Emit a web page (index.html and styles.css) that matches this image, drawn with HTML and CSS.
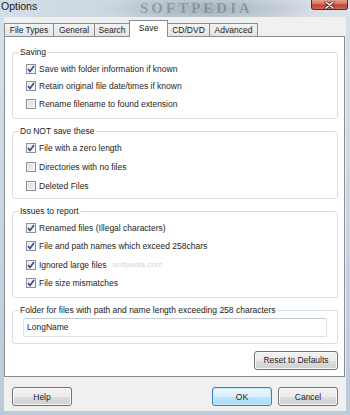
FILE: index.html
```html
<!DOCTYPE html>
<html lang="en">
<head>
  <meta charset="UTF-8" />
  <title>Options</title>
  <link rel="stylesheet" href="styles.css">
</head>
<body>
  <div class="window">
    <!-- Title bar -->
    <div class="titlebar">
      <span class="title">Options</span>
      <span class="wm-title">SOFTPEDIA</span>
      <div class="close">
        <svg width="11" height="8" viewBox="0 0 11 8">
          <path d="M2 1 L9 7 M9 1 L2 7" stroke="#5a1a12" stroke-width="3" stroke-linecap="round"/>
          <path d="M2 1 L9 7 M9 1 L2 7" stroke="#ffffff" stroke-width="1.6" stroke-linecap="round"/>
        </svg>
      </div>
    </div>

    <div class="client">
      <div class="tabs">
        <div class="tab w-types">File Types</div>
        <div class="tab w-general">General</div>
        <div class="tab w-search">Search</div>
        <div class="tab active w-save">Save</div>
        <div class="tab w-cd">CD/DVD</div>
        <div class="tab w-adv">Advanced</div>
      </div>

      <div class="panel">
        <fieldset class="group group-saving">
          <legend>Saving</legend>
          <div class="row"><span class="box on"><svg width="8" height="8" viewBox="0 0 8 8"><path d="M1 4 L3 6.5 L7 1" fill="none" stroke="#2c4a8c" stroke-width="1.6"/></svg></span>Save with folder information if known</div>
          <div class="row"><span class="box on"><svg width="8" height="8" viewBox="0 0 8 8"><path d="M1 4 L3 6.5 L7 1" fill="none" stroke="#2c4a8c" stroke-width="1.6"/></svg></span>Retain original file date/times if known</div>
          <div class="row"><span class="box"></span>Rename filename to found extension</div>
        </fieldset>

        <fieldset class="group group-skip">
          <legend>Do NOT save these</legend>
          <div class="row"><span class="box on"><svg width="8" height="8" viewBox="0 0 8 8"><path d="M1 4 L3 6.5 L7 1" fill="none" stroke="#2c4a8c" stroke-width="1.6"/></svg></span>File with a zero length</div>
          <div class="row"><span class="box"></span>Directories with no files</div>
          <div class="row"><span class="box"></span>Deleted Files</div>
        </fieldset>

        <fieldset class="group group-issues">
          <legend>Issues to report</legend>
          <div class="row"><span class="box on"><svg width="8" height="8" viewBox="0 0 8 8"><path d="M1 4 L3 6.5 L7 1" fill="none" stroke="#2c4a8c" stroke-width="1.6"/></svg></span>Renamed files (Illegal characters)</div>
          <div class="row"><span class="box on"><svg width="8" height="8" viewBox="0 0 8 8"><path d="M1 4 L3 6.5 L7 1" fill="none" stroke="#2c4a8c" stroke-width="1.6"/></svg></span>File and path names which exceed 258chars</div>
          <div class="row"><span class="box on"><svg width="8" height="8" viewBox="0 0 8 8"><path d="M1 4 L3 6.5 L7 1" fill="none" stroke="#2c4a8c" stroke-width="1.6"/></svg></span>Ignored large files<span class="wm-small">softpedia.com</span></div>
          <div class="row"><span class="box on"><svg width="8" height="8" viewBox="0 0 8 8"><path d="M1 4 L3 6.5 L7 1" fill="none" stroke="#2c4a8c" stroke-width="1.6"/></svg></span>File size mismatches</div>
        </fieldset>

        <fieldset class="group group-folder">
          <legend>Folder for files with path and name length exceeding 258 characters</legend>
          <input class="text-input" type="text" value="LongName" />
        </fieldset>

        <div class="reset-row">
          <button class="btn btn-reset">Reset to Defaults</button>
        </div>
      </div>

      <div class="bottom-row">
        <button class="btn">Help</button>
        <button class="btn btn-default btn-ok">OK</button>
        <button class="btn">Cancel</button>
      </div>
    </div>
  </div>
</body>
</html>
```

FILE: styles.css
```css
body {
  margin: 0;
  font-family: "Liberation Sans", Arial, sans-serif;
  font-size: 8.5px;
  color: #1e1e1e;
}

.window {
  width: 350px;
  height: 415px;
  display: flex;
  flex-direction: column;
  overflow: hidden;
  background: linear-gradient(to bottom, #d9e2ea 0%, #c7d3df 60%, #bccbd9 100%);
}

/* Title bar */
.titlebar {
  position: relative;
  height: 17px;
  display: flex;
  align-items: flex-start;
  background:
    radial-gradient(ellipse 110px 16px at 210px 9px, rgba(120, 130, 140, 0.45), rgba(120, 130, 140, 0) 100%),
    linear-gradient(to right, #d3dde6, #c9d4de 50%, #dbe3ea);
}

.title {
  font-size: 10.5px;
  line-height: 13px;
  padding-left: 1px;
  color: #1b1b1b;
  position: relative;
  z-index: 1;
}

.wm-title {
  position: absolute;
  left: 140px;
  top: 1px;
  font-family: "Liberation Serif", serif;
  font-weight: bold;
  font-size: 15px;
  line-height: 15px;
  letter-spacing: 3px;
  color: rgba(70, 80, 90, 0.35);
  filter: blur(0.7px);
}

.close {
  margin-left: auto;
  margin-right: 2px;
  width: 37px;
  height: 10px;
  box-sizing: border-box;
  border: 1px solid #6a2318;
  border-top: none;
  border-radius: 0 0 3px 3px;
  background: linear-gradient(to bottom, #e5a190 0%, #d4705c 45%, #c0402e 55%, #d2685a 100%);
  display: flex;
  align-items: center;
  justify-content: center;
  position: relative;
  z-index: 1;
}

/* Client area */
.client {
  flex: 1;
  margin: 0 4px 4px 4px;
  background: #f0f0f0;
  display: flex;
  flex-direction: column;
}

.tabs {
  display: flex;
  align-items: flex-end;
  height: 16px;
  padding-top: 3px;
}

.tab {
  box-sizing: border-box;
  height: 13px;
  margin-left: -1px;
  border: 1px solid #898c95;
  border-bottom: none;
  background: linear-gradient(to bottom, #f3f3f3, #e4e4e4);
  line-height: 12px;
  text-align: center;
  white-space: nowrap;
}

.tab:first-child {
  margin-left: 0;
}

.tab.active {
  height: 17px;
  margin-bottom: -1px;
  padding-top: 1px;
  background: #ffffff;
  position: relative;
  z-index: 1;
}

.w-types { width: 50px; }
.w-general { width: 42px; }
.w-search { width: 36px; }
.w-save { width: 39px; }
.w-cd { width: 43px; }
.w-adv { width: 49px; }

.panel {
  width: 341px;
  box-sizing: border-box;
  border: 1px solid #898c95;
  background: #ffffff;
  padding: 10px 0 6.5px 0;
}

.group {
  margin: 0 6px 7px 7px;
  padding: 2px 0 3px 0;
  border: 1px solid #d5dfe5;
  border-radius: 3px;
}

.group legend {
  margin-left: 6px;
  padding: 0 1px;
  line-height: 11px;
  color: #1b1b1b;
}

.row {
  display: flex;
  align-items: center;
  height: 18px;
  padding-left: 13px;
  gap: 3px;
  white-space: nowrap;
}

.group-saving { padding-bottom: 5px; }
.group-saving .row { height: 17.5px; }

.group-skip { padding-bottom: 2px; }
.group-skip .row { height: 19px; }

.group-issues { padding-bottom: 4px; }
.group-issues .row { height: 18.5px; }

.box {
  width: 10px;
  height: 10px;
  box-sizing: border-box;
  border: 1px solid #8e8f8f;
  background: linear-gradient(135deg, #d7d9dc, #f6f6f6);
  box-shadow: inset 0 0 0 1px #f4f4f4;
  display: flex;
  align-items: center;
  justify-content: center;
}

.box.on {
  background: linear-gradient(135deg, #e2e4e7, #fbfbfb);
}

.wm-small {
  margin-left: 3px;
  font-size: 8px;
  color: #d2d6da;
}

.group-folder {
  padding: 2px 0 6px 0;
}

.text-input {
  display: block;
  width: 304px;
  height: 19px;
  margin: 0 0 0 10px;
  box-sizing: border-box;
  border: 1px solid #dde3e9;
  border-top-color: #c5ccd4;
  border-radius: 2px;
  padding: 0 3px;
  font: inherit;
  color: #1e1e1e;
  outline: none;
}

.reset-row {
  display: flex;
  justify-content: flex-end;
  padding-right: 6px;
}

.btn {
  width: 60px;
  height: 19px;
  padding: 0;
  box-sizing: border-box;
  border: 1px solid #707070;
  border-radius: 3px;
  background: linear-gradient(to bottom, #f2f2f2 0%, #ebebeb 50%, #dddddd 51%, #cfcfcf 100%);
  box-shadow: inset 0 0 0 1px #fbfbfb;
  font: inherit;
  color: #1e1e1e;
}

.btn-reset {
  width: 84px;
}

.btn-default {
  border-color: #3c7fb1;
  background: linear-gradient(to bottom, #eaf6fd 0%, #d9f0fc 50%, #bee6fd 51%, #a7d9f5 100%);
  box-shadow: inset 0 0 0 1px #c8ebfb;
}

.bottom-row {
  display: flex;
  gap: 6px;
  padding: 10px 8px 0 8px;
}

.btn-ok {
  margin-left: auto;
}
```
